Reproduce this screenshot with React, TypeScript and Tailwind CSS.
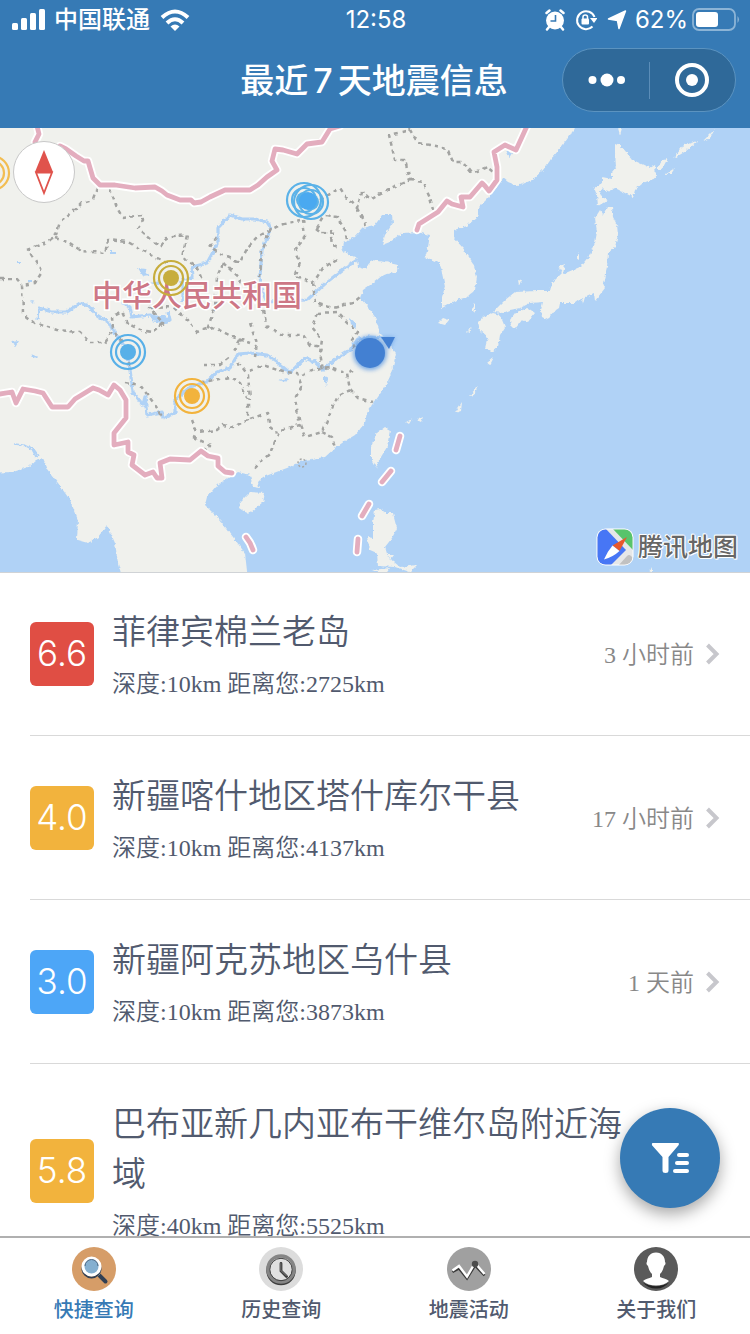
import React from "react";

const SANS = "font-['Inter','Noto_Sans_CJK_SC',sans-serif]";

type Quake = { mag: string; color: string; place: string; depth: string; distance: string; time: string };

const quakes: Quake[] = [
  { mag: "6.6", color: "bg-[#e04e44]", place: "菲律宾棉兰老岛", depth: "10km", distance: "2725km", time: "3 小时前" },
  { mag: "4.0", color: "bg-[#f2b33d]", place: "新疆喀什地区塔什库尔干县", depth: "10km", distance: "4137km", time: "17 小时前" },
  { mag: "3.0", color: "bg-[#4da6f7]", place: "新疆阿克苏地区乌什县", depth: "10km", distance: "3873km", time: "1 天前" },
  { mag: "5.8", color: "bg-[#f2b33d]", place: "巴布亚新几内亚布干维尔岛附近海域", depth: "40km", distance: "5525km", time: "1 天前" },
];

const land = [
  // Mainland Asia
  "M-20 120L575 120 575 128 563 145 552 158 543 170 532 180 518 186 508 182 503 178 500 183 488 198 478 208 478 216 467 226 454 230 454 238 463 248 473 263 477 277 475 290 467 297 457 300 442 308 442 297 445 287 442 273 440 263 425 257 428 247 430 235 417 232 403 233 390 242 382 245 385 235 393 223 392 215 382 215 375 225 363 228 355 237 343 242 342 250 350 255 357 258 358 267 365 269 372 260 385 262 398 265 397 272 383 275 373 283 363 290 360 298 368 307 375 317 380 333 387 340 391 347 396 353 393 367 388 382 378 397 367 412 365 423 355 435 345 441 335 448 325 457 305 460 287 468 263 477 258 482 259 488 253 487 250 475 238 472 217 485 207 497 205 505 220 520 233 537 245 553 248 580 123 580 118 563 115 543 107 525 98 537 88 543 77 540 78 520 70 500 58 483 48 470 43 458 36 460 28 467 13 472 -20 473Z",
  // Hokkaido
  "M615 143L620 145 633 160 650 168 655 165 656 178 643 183 635 190 633 197 623 192 615 188 607 192 603 188 600 192 602 197 608 200 598 206 597 195 594 188 602 183 602 177 612 179 612 172 616 167 615 153Z",
  // Honshu
  "M595 218L600 210 603 215 607 207 612 207 613 217 617 225 618 235 615 247 608 253 607 267 603 283 605 288 595 301 594 293 585 297 583 304 582 298 575 303 560 303 559 308 553 312 548 320 542 317 541 310 543 302 530 303 520 308 510 310 503 313 493 312 500 305 505 300 515 292 537 291 550 291 552 283 562 273 558 267 565 264 563 274 580 267 590 255 595 243 597 232Z",
  // Shikoku and Kyushu
  "M510 320L515 313 528 308 535 313 528 322 522 320 515 329 511 325Z",
  "M478 322L483 317 493 313 500 315 505 327 500 335 498 347 492 352 485 348 488 337 480 330Z",
  // Hainan, Taiwan, Luzon, Jeju
  "M240 502L250 492 265 493 263 502 250 513 245 512 239 508Z",
  "M385 427L390 430 387 447 378 462 377 468 371 457 371 447 377 433Z",
  "M375 510L380 509 386 513 393 513 397 528 392 538 385 547 388 557 400 567 417 565 410 572 395 567 378 566 377 553 370 550 367 537 373 538 373 523Z",
  "M438 323L443 318 449 320 445 325Z",
  // Smaller islands
  "M618 128L622 128 620 135Z M576 258L579 252 579 260Z M518 280L522 282 519 285Z M372 570L390 568 385 575Z M387 555L394 555 391 559Z M467 332L472 327 469 333Z M472 308L475 303 475 313Z M657 169L663 159 668 158 662 169Z M673 159L684 145 698 141 686 151Z M703 141L715 129 710 138Z M665 174L675 168 671 174Z M455 413L462 402 461 411Z M469 396L478 386 474 395Z M487 363L494 357 490 365Z M406 422L412 419 409 424Z M417 420L423 417 421 422Z M649 572L652 566 652 573Z",
];

const rivers =
  "M38 320L39 308 52 312 67 312 80 303 88 306 97 315 108 322 115 333 127 350 130 370 133 392 143 405 145 397 147 415 162 412 163 418 175 413 175 400 190 387 207 382 217 372 230 368 238 354 250 353 267 355 277 362 290 373 297 366 305 358 315 362 323 370 337 358 350 350 358 339 370 337 385 338 M122 302L130 307 132 317 150 315 160 318 170 320 168 312 M180 284L193 277 192 267 207 263 218 243 218 228 230 215 242 219 255 219 267 222 271 228 262 250 260 277 263 293 267 302 307 300 327 282 345 268 357 260 M183 278L183 302";

const provinces =
  "M97 188L93 200 82 203 72 213 60 222 55 238 28 250 35 260 42 272 35 283 22 285 23 313 35 323 57 330 80 332 90 343 105 343 113 330 112 317 122 312 127 323 140 330 152 332 163 323 150 308 173 307 188 320 197 332 213 327 233 337 250 343 M55 238L67 242 80 251 105 253 108 240 128 242 147 253 167 263 M110 188L117 208 123 218 142 215 143 221 138 228 152 240 160 247 167 238 187 235 182 257 197 267 202 280 M0 279L17 279 22 285 M217 237L210 247 227 257 240 262 248 247 257 237 280 225 300 220 M320 200L340 188 348 200 357 208 362 192 370 200 393 187 410 180 405 160 395 160 389 135 410 130 418 143 447 148 453 162 463 162 472 173 487 167 497 175 M410 180L423 182 430 197 433 210 M357 208L365 225 M303 220L305 237 295 248 300 263 295 277 313 283 323 268 340 257 M313 283L315 303 333 308 353 303 360 297 M317 313L312 327 322 340 320 353 323 370 M317 313L338 312 348 323 358 332 352 340 355 350 M263 310L267 327 283 335 303 335 310 345 322 347 M250 323L257 343 255 357 M223 263L217 277 215 307 207 330 M223 263L240 278 239 287 M240 340L233 353 M271 228L262 250 260 277 M203 365L220 365 230 357 M125 382L140 385 153 402 163 417 M115 333L127 350 130 370 M192 420L197 432 217 430 223 425 233 427 248 420 248 400 240 383 230 377 203 382 M193 437L210 445 203 452 M250 370L263 365 283 372 297 373 302 387 295 398 300 425 280 430 270 453 253 470 M302 375L320 368 330 367 347 373 350 390 337 397 330 413 322 432 305 437 300 425 M322 432L332 437 335 448 M250 419L267 413 270 427 277 433 M350 390L358 398 373 402 M353 370L347 373 M238 362L248 375 250 400 M317 228L325 215 337 217 345 230 347 240 M330 230L332 245 340 247 M316 228L322 233 338 234";

const frontier =
  "M37 126L39 134 35 142 M60 146L66 149 76 156 84 161 88 161 93 178 100 185 115 185 135 188 155 187 162 191 167 195 180 200 191 200 194 203 201 202 210 197 225 190 250 190 258 185 267 177 277 170 272 161 275 149 283 150 297 154 307 144 322 142 330 129 340 126 M417 230L419 224 438 212 447 201 452 204 463 207 461 197 470 197 482 183 485 186 489 191 497 180 497 167 494 152 505 145 516 150 522 137 527 126 M-6 395L12 392 16 403 23 389 35 391 43 393 52 407 68 407 75 399 93 388 99 390 108 395 114 385 120 390 126 400 126 418 114 433 114 445 128 442 128 452 134 455 132 465 145 475 153 472 157 478 162 478 160 463 170 459 190 460 201 451 208 456 218 458 218 466 225 472 232 473";

const seaFrontier = "M400 436L396 450 M391 471L382 482 M369 504L362 516 M358 539L357 552 M246 537Q251 543 253 550";

function Ripple({ x, y, color }: { x: number; y: number; color: string }) {
  return (
    <g fill="none" stroke={color}>
      <circle cx={x} cy={y} r="17" strokeWidth="2.2" />
      <circle cx={x} cy={y} r="12" strokeWidth="2.2" />
      <circle cx={x} cy={y} r="8" fill={color} stroke="none" />
    </g>
  );
}

function QuakeMap() {
  return (
    <section aria-label="地震分布地图" className="relative h-[444px] shrink-0 overflow-hidden bg-[#b0d2f6] shadow-[0_1px_0_#d0d3d6]">
      <svg viewBox="0 128 750 444" preserveAspectRatio="xMidYMid slice" className="h-full w-full">
        <defs>
          <filter id="coast" filterUnits="userSpaceOnUse" x="-20" y="110" width="790" height="480">
            <feTurbulence type="fractalNoise" baseFrequency="0.28" numOctaves="2" seed="4" result="n" />
            <feDisplacementMap in="SourceGraphic" in2="n" scale="4" xChannelSelector="R" yChannelSelector="G" />
          </filter>
          <filter id="rough" filterUnits="userSpaceOnUse" x="-20" y="110" width="790" height="480">
            <feTurbulence type="fractalNoise" baseFrequency="0.12" numOctaves="2" seed="9" result="n" />
            <feDisplacementMap in="SourceGraphic" in2="n" scale="4" xChannelSelector="R" yChannelSelector="G" />
          </filter>
          <filter id="glow" x="-50%" y="-50%" width="200%" height="200%">
            <feGaussianBlur stdDeviation="2" />
          </filter>
        </defs>
        <g filter="url(#coast)">
          <path d={land.join("")} fill="#f0f1ed" />
          <path
            d="M138 268l7 1 4 6-6 1z M150 283l10-2-2 4z M150 317l12-2 8 5-4 4-14-3z M110 251h5v3h-5z M18 261h4v2h-4z M28 280h4v2h-4z M30 301l5 1-3 1z M11 342l8-1-3 5z M31 356l7-1-4 4z M278 380l10-2-3 4z M324 376l4 2-1 8-3-4z M350 318l6 5 0 6-5-4z M355 343l7-2 1 6-7 1z M506 151l6 2-3 5z"
            fill="#b0d2f6"
          />
          <path d="M14 444l10 1 8 4 4 8 M32 448l6 8" fill="none" stroke="#b0d2f6" strokeWidth="1.5" />
          <path d={rivers} fill="none" stroke="#b0d2f6" strokeWidth="3.2" strokeLinejoin="round" />
        </g>
        <g filter="url(#rough)">
          <path d={provinces} fill="none" stroke="#a3a4a2" strokeWidth="2.5" strokeDasharray="4 4" strokeLinejoin="round" />
        </g>
        <circle cx="302" cy="463" r="4" fill="none" stroke="#a6a7a5" strokeWidth="1.5" strokeDasharray="2 2" />
        <g fill="none" strokeLinecap="round" strokeLinejoin="round">
          <path d={frontier + seaFrontier} stroke="#fff" strokeWidth="8.5" />
          <path d={frontier + seaFrontier} stroke="#e3adbe" strokeWidth="4.8" />
        </g>
        <text
          x="197"
          y="306"
          textAnchor="middle"
          fontSize="30"
          fill="#cd7786"
          stroke="#fff"
          strokeWidth="3"
          paintOrder="stroke"
          className={`${SANS} font-medium`}
        >
          中华人民共和国
        </text>
        <Ripple x={-8} y={173} color="#f2bd52" />
        <Ripple x={171} y={278} color="#c7ad3d" />
        <Ripple x={128} y={352} color="#58b0e8" />
        <Ripple x={192} y={396} color="#f2b33d" />
        <Ripple x={304} y={200} color="#5bb2e8" />
        <Ripple x={311} y={202} color="#5bb2e8" />
        <circle cx="308" cy="201" r="9" fill="#4aa9f0" />
        <circle cx="370" cy="353" r="17" fill="#4a8de0" opacity="0.7" filter="url(#glow)" />
        <circle cx="370" cy="353" r="15" fill="#4380d2" />
        <path d="M381 337l14 0-6 13z" fill="#4a8de0" opacity="0.6" filter="url(#glow)" />
        <path d="M381 337l14 0-6 12z" fill="#4380d2" />
        <circle cx="44" cy="172" r="30.5" fill="#fff" stroke="#c8c8c8" />
        <path d="M44 150l9 22H35z" fill="#e0534c" />
        <path d="M36 172.500h16L44 193z" fill="#fff" stroke="#e0534c" strokeWidth="1.800" />
      </svg>
      <div className="absolute right-3 bottom-1.5 flex items-center gap-1">
        <svg viewBox="0 0 38 38" className="size-[38px]" aria-hidden="true">
          <defs>
            <clipPath id="tile">
              <rect x="1.500" y="1.500" width="35" height="35" rx="8" />
            </clipPath>
          </defs>
          <rect x="0.500" y="0.500" width="37" height="37" rx="9" fill="#fff" />
          <g clipPath="url(#tile)">
            <rect width="38" height="38" fill="#e6e7e8" />
            <path d="M0 0h9l21 22-16 16H0z" fill="#4776f5" />
            <path d="M16 0h22v23z" fill="#57c46b" />
            <path d="M22 38l9-10q2-2 4 0l3 3v7z" fill="#c1c1c1" />
          </g>
          <path d="M31 9L16.500 17.500 23.500 23z" fill="#e8582c" />
          <path d="M16.500 17.500L23.500 23Q17 29 8 31.500 11 24 16.500 17.500z" fill="#fff" />
        </svg>
        <span
          className={`${SANS} text-[25px] leading-[34px] font-medium text-[#666] [text-shadow:1px_0_#fff,-1px_0_#fff,0_1px_#fff,0_-1px_#fff,1px_1px_#fff,-1px_-1px_#fff]`}
        >
          腾讯地图
        </span>
      </div>
    </section>
  );
}

function StatusBar() {
  return (
    <div className="grid h-10 grid-cols-[1fr_auto_1fr] items-center pr-2.5 pl-3">
      <div className="flex items-center gap-2">
        <svg viewBox="0 0 34 22" className="h-[22px] w-[34px]" fill="#fff" aria-hidden="true">
          <rect x="0" y="14" width="6" height="7" rx="1.5" />
          <rect x="9" y="9" width="6" height="12" rx="1.5" />
          <rect x="18" y="4" width="6" height="17" rx="1.5" />
          <rect x="27" y="0" width="6" height="21" rx="1.5" />
        </svg>
        <span className="text-2xl leading-8 font-medium">中国联通</span>
        <svg viewBox="0 0 30 22" className="ml-0.5 h-[22px] w-[30px]" fill="none" stroke="#fff" strokeWidth="4" aria-hidden="true">
          <path d="M2 8.500Q15-3.500 28 8.500" />
          <path d="M7 14Q15 6.500 23 14" />
          <path d="M15 22l-4.500-4.500Q15 13.500 19.500 17.500z" fill="#fff" stroke="none" />
        </svg>
      </div>
      <span className="text-2xl leading-8">12:58</span>
      <div className="flex items-center justify-end">
        <svg viewBox="0 0 20 22" className="mr-2.5 h-[22px] w-5" aria-hidden="true">
          <circle cx="10" cy="11.500" r="9" fill="#fff" />
          <g stroke="#fff" strokeWidth="2.500" strokeLinecap="round">
            <path d="M1.500 4l3-2.500M18.500 4l-3-2.500M4 18l-2 2.500M16 18l2 2.500" />
          </g>
          <path d="M10.500 6v6H5.500" fill="none" stroke="#367ab5" strokeWidth="1.600" />
        </svg>
        <svg viewBox="0 0 22 22" className="mr-2.5 size-[22px]" aria-hidden="true">
          <path d="M17.500 17.500A9 9 0 1 1 19.500 8" fill="none" stroke="#fff" strokeWidth="2" />
          <path d="M15 9h7.500l-3.500 5z" fill="#fff" />
          <rect x="6.500" y="9.500" width="7.500" height="6" rx="1" fill="#fff" />
          <path d="M8 10V8q0-2 2.250-2t2.250 2v2" fill="none" stroke="#fff" strokeWidth="1.500" />
        </svg>
        <svg viewBox="0 0 20 20" className="mr-2 size-5" aria-hidden="true">
          <path d="M18.500 1L12 18.500 10.500 10.500 1.500 9z" fill="#fff" stroke="#fff" strokeWidth="1.500" strokeLinejoin="round" />
        </svg>
        <span className="mr-1 text-2xl leading-8">62%</span>
        <svg viewBox="0 0 48 24" className="h-6 w-12" aria-hidden="true">
          <rect x="1" y="1" width="42" height="21" rx="6" fill="none" stroke="#8cb4d6" strokeWidth="1.800" />
          <rect x="4" y="4" width="22" height="15" rx="3" fill="#fff" />
          <path d="M45.500 8q3 3.500 0 7z" fill="#8cb4d6" />
        </svg>
      </div>
    </div>
  );
}

function Header() {
  return (
    <header className={`${SANS} h-32 shrink-0 bg-[#367ab5] text-white`}>
      <StatusBar />
      <div className="grid h-20 grid-cols-[1fr_auto_1fr] items-center pr-3.5">
        <h1 className="col-start-2 ml-3 pt-0.5 text-[34px] leading-[48px] font-medium">
          最近<span className="mx-[5px]">7</span>天地震信息
        </h1>
        <div className="flex h-16 w-[174px] items-center justify-self-end rounded-full border border-[#5b93c0] bg-[#2f6999]">
          <button type="button" aria-label="更多" className="flex h-full flex-1 items-center justify-center">
            <svg viewBox="0 0 38 14" className="h-3.5 w-[38px]" fill="#fff">
              <circle cx="5.500" cy="7" r="4" />
              <circle cx="20" cy="7" r="6.500" />
              <circle cx="34" cy="7" r="4" />
            </svg>
          </button>
          <span className="h-[37px] w-px bg-[#5b8db8]" />
          <button type="button" aria-label="关闭" className="flex h-full flex-1 items-center justify-center">
            <svg viewBox="0 0 34 34" className="size-[34px]">
              <circle cx="17" cy="17" r="15" fill="none" stroke="#fff" strokeWidth="4" />
              <circle cx="17" cy="17" r="6" fill="#fff" />
            </svg>
          </button>
        </div>
      </div>
    </header>
  );
}

function QuakeRow({ quake }: { quake: Quake }) {
  return (
    <li className="ml-[30px] border-b border-[#d9d9d9]">
      <a href="#detail" className="flex items-center pt-[35px] pr-[30px] pb-[34px]">
        <span className={`${SANS} ${quake.color} flex size-16 shrink-0 items-center justify-center rounded-md pb-0.5 text-[35px] leading-none font-[350] text-white`}>
          {quake.mag}
        </span>
        <div className="ml-[18px] min-w-0 flex-1 font-[350] text-[#515a6e]">
          <h2 className={`${SANS} text-[34px] leading-[50px]`}>{quake.place}</h2>
          <p className="mt-2.5 text-2xl leading-[34px]">
            深度:{quake.depth} 距离您:{quake.distance}
          </p>
        </div>
        <span className="ml-1 shrink-0 pt-0.5 text-2xl leading-[34px] font-[350] text-[#888]">{quake.time}</span>
        <svg viewBox="0 0 14 22" className="ml-3 h-[22px] w-3.5 shrink-0" fill="none" stroke="#c7c7cc" strokeWidth="4" aria-hidden="true">
          <path d="M1.500 2l9 9-9 9" />
        </svg>
      </a>
    </li>
  );
}

function SearchIcon() {
  return (
    <svg viewBox="0 0 44 44" className="size-11" aria-hidden="true">
      <circle cx="22" cy="22" r="22" fill="#d69d68" />
      <path d="M27.500 28.500l6 6" stroke="#324054" strokeWidth="4" strokeLinecap="round" />
      <path d="M24 25l3 3" stroke="#fff" strokeWidth="3" />
      <circle cx="19.500" cy="21.500" r="9" fill="none" stroke="#324054" strokeWidth="2" />
      <circle cx="19.500" cy="19.500" r="8.500" fill="#84afd0" stroke="#fff" strokeWidth="3" />
      <path d="M13 19a6.500 6.500 0 0 1 13 0" fill="none" stroke="#4a6580" strokeWidth="1" />
    </svg>
  );
}

function ClockIcon() {
  return (
    <svg viewBox="0 0 44 44" className="size-11" aria-hidden="true">
      <circle cx="22" cy="22" r="22" fill="#dcdcdc" />
      <circle cx="22" cy="23.500" r="13.500" fill="none" stroke="#3d3d3d" strokeWidth="2.500" />
      <circle cx="22" cy="22" r="13" fill="#e0e0e0" stroke="#858585" strokeWidth="3.500" />
      <circle cx="22" cy="22.500" r="11.200" fill="none" stroke="#3f3f3f" strokeWidth="1" />
      <path d="M22 16.500v7.500l5.500 5.500" fill="none" stroke="#3a3a3a" strokeWidth="2.800" strokeLinecap="round" />
      <path d="M21.800 16.500v7l5.500 5" fill="none" stroke="#6a6a6a" strokeWidth="1.200" strokeLinecap="round" />
    </svg>
  );
}

function WaveIcon() {
  return (
    <svg viewBox="0 0 44 44" className="size-11" aria-hidden="true">
      <circle cx="22" cy="22" r="22" fill="#a0a0a0" />
      <g fill="none" strokeWidth="2.400" strokeLinejoin="miter">
        <path d="M5.500 25L12 21.500 20 31.500 28 18.500 37.500 28.500" stroke="#3a3a3a" />
        <path d="M5.500 23.500L12 19 20 29.500 28 16 37.500 27" stroke="#fff" />
      </g>
      <circle cx="28" cy="17" r="3.200" fill="#4c4c4c" />
    </svg>
  );
}

function PersonIcon() {
  return (
    <svg viewBox="0 0 44 44" className="size-11" aria-hidden="true">
      <circle cx="22" cy="22" r="22" fill="#5a5a5a" />
      <path d="M9 35.500Q22 43 35 35.500Q29 42 22 41.500 14 41.500 9 35.500z" fill="#222" />
      <path d="M22 5.500c6 0 9 4.500 9 9.500 1 1 .5 3-1 4-1 4-2 6-4 8v3c3 1.500 7 1.800 9 4-3 3-8 4.500-13 4.500S12 37 9 34c2-2.200 6-2.500 9-4v-3c-2-2-3-4-4-8-1.500-1-2-3-1-4 0-5 3-9.500 9-9.500z" fill="#fff" />
    </svg>
  );
}

const tabs = [
  { label: "快捷查询", icon: <SearchIcon />, active: true },
  { label: "历史查询", icon: <ClockIcon />, active: false },
  { label: "地震活动", icon: <WaveIcon />, active: false },
  { label: "关于我们", icon: <PersonIcon />, active: false },
];

export default function App() {
  return (
    <div className="flex h-screen flex-col bg-white font-['Liberation_Serif','Noto_Sans_CJK_SC',serif]">
      <Header />
      <QuakeMap />
      <main className="relative min-h-0 flex-1">
        <ul className="h-full overflow-y-auto [scrollbar-width:none]">
          {quakes.map((q) => (
            <QuakeRow key={q.place} quake={q} />
          ))}
        </ul>
        <button
          type="button"
          aria-label="筛选"
          className="absolute right-[30px] bottom-7 flex size-[100px] items-center justify-center rounded-full bg-[#367ab5] shadow-[0_6px_16px_rgba(0,0,0,0.35)]"
        >
          <svg viewBox="0 0 38 32" className="h-8 w-[38px]" fill="#fff">
            <path d="M1.500 1h26q1 1 0 2.200L17.500 15v13.500q0 2.500-3 2.500t-3-2.500V15L1 3.200Q.5 1.500 1.500 1z" />
            <rect x="26" y="11" width="12" height="4" rx="2" />
            <rect x="24" y="19" width="14" height="4" rx="2" />
            <rect x="22" y="27" width="16" height="4" rx="2" />
          </svg>
        </button>
      </main>
      <nav className="grid h-[98px] shrink-0 grid-cols-4 border-t-2 border-[#b0b0b0] bg-white">
        {tabs.map((t) => (
          <a
            key={t.label}
            href="#tab"
            aria-current={t.active ? "page" : undefined}
            className={`${SANS} flex flex-col items-center gap-[5px] pt-[9px] text-xl leading-7 font-medium ${t.active ? "text-[#367ab5]" : "text-[#515a6e]"}`}
          >
            {t.icon}
            {t.label}
          </a>
        ))}
      </nav>
    </div>
  );
}
